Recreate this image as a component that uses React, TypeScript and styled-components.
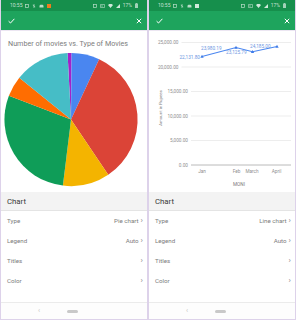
import React from 'react';
import styled, { createGlobalStyle } from 'styled-components';

const GlobalStyle = createGlobalStyle`
  html, body {
    margin: 0;
    padding: 0;
    background: #ddd2ea;
  }
  body {
    font-family: Roboto, "Noto Sans", "Liberation Sans", sans-serif;
  }
`;

const Frame = styled.div`
  display: flex;
  gap: 2px;
  width: 296px;
  height: 320px;
  padding: 0 1px 1px;
  box-sizing: border-box;
  background: #ddd2ea;
`;

const Phone = styled.div`
  flex: 1;
  min-width: 0;
  display: flex;
  flex-direction: column;
  background: #fff;
  overflow: hidden;
`;

const StatusBar = styled.div`
  height: 11px;
  background: #168f4c;
  display: flex;
  align-items: center;
  padding: 0 9px 0 9px;
  gap: 3px;
  color: rgba(255, 255, 255, 0.75);
  font-size: 5px;
  line-height: 1;
`;

const StatusSpacer = styled.div`
  flex: 1;
`;

const Toolbar = styled.div`
  height: 19px;
  background: #1ea45d;
  display: flex;
  align-items: center;
  justify-content: space-between;
  padding: 0 5px 0 7px;
`;

const ChartArea = styled.div`
  height: 162px;
  display: flex;
  flex-direction: column;
  border-top: 1px solid #ece6f2;
  box-sizing: border-box;
`;

const ChartTitle = styled.div`
  height: 20px;
  padding: 8px 0 0 7px;
  box-sizing: border-box;
  font-size: 7.2px;
  color: #7d7d7d;
  white-space: nowrap;
`;

const SectionHeader = styled.div`
  height: 18px;
  background: #f3f3f3;
  border-bottom: 1px solid #e4e4e4;
  display: flex;
  align-items: center;
  padding-left: 6px;
  font-size: 7.8px;
  color: #3a3a3a;
`;

const Row = styled.div`
  height: 20px;
  display: flex;
  align-items: center;
  justify-content: space-between;
  padding: 0 4px 0 6px;
  font-size: 6.2px;
  color: #7d7d7d;
`;

const RowValue = styled.span`
  display: flex;
  align-items: center;
  gap: 2px;
  color: #7d7d7d;
`;

const Chevron = styled.span`
  font-size: 8px;
  color: #8a8a8a;
  line-height: 1;
`;

const Filler = styled.div`
  flex: 1;
  border-bottom: 1px solid #ebebeb;
`;

const NavBar = styled.div`
  height: 16px;
  display: flex;
  align-items: center;
  padding-left: 37px;
  gap: 27px;
  background: #fdfdfd;
`;

const BackGlyph = styled.span`
  font-size: 7px;
  color: #c4c4c4;
  line-height: 1;
`;

const HomePill = styled.div`
  width: 11px;
  height: 3px;
  border-radius: 2px;
  background: #c9c9c9;
`;

const slicePath = (cx: number, cy: number, r: number, a0: number, a1: number) => {
  const pt = (a: number) => [cx + r * Math.sin((a * Math.PI) / 180), cy - r * Math.cos((a * Math.PI) / 180)];
  const [x0, y0] = pt(a0);
  const [x1, y1] = pt(a1);
  const large = a1 - a0 > 180 ? 1 : 0;
  return `M${cx},${cy} L${x0},${y0} A${r},${r} 0 ${large} 1 ${x1},${y1} Z`;
};

const slices = [
  { from: -3, to: 0.5, color: '#a322c9' },
  { from: 0.5, to: 25, color: '#4a86f0' },
  { from: 25, to: 146, color: '#db4437' },
  { from: 146, to: 187, color: '#f4b400' },
  { from: 187, to: 291, color: '#0f9d58' },
  { from: 291, to: 309, color: '#ff6d01' },
  { from: 309, to: 357, color: '#46bdc6' },
];

function PieChart() {
  return (
    <svg width="146" height="142" viewBox="0 0 146 142">
      {slices.map((s) => (
        <path key={s.color} d={slicePath(70, 69, 67, s.from, s.to)} fill={s.color} />
      ))}
    </svg>
  );
}

// y axis: 0 at 134, 5000 per 24.5px
const yFor = (v: number) => 134 - (v / 5000) * 24.5;

// the top two ticks sit further left than the rest, as in the screenshot
const ticks = [
  { v: 0, text: '0.00', right: 39 },
  { v: 5000, text: '5,000.00', right: 39 },
  { v: 10000, text: '10,000.00', right: 39 },
  { v: 15000, text: '15,000.00', right: 39 },
  { v: 20000, text: '20,000.00', right: 29.5 },
  { v: 25000, text: '25,000.00', right: 29.5 },
];
const points = [
  { x: 53, v: 22131.8, label: '22,131.80', lx: 51, ly: 27.5, anchor: 'end' },
  { x: 87, v: 23980.19, label: '23,980.19', lx: 52, ly: 18.5, anchor: 'start' },
  { x: 103.5, v: 23125.79, label: '23,125.79', lx: 77, ly: 23, anchor: 'start' },
  { x: 128, v: 24185, label: '24,185.00', lx: 101, ly: 17, anchor: 'start' },
];
const months = [
  { x: 53, name: 'Jan' },
  { x: 87.5, name: 'Feb' },
  { x: 103, name: 'March' },
  { x: 127.5, name: 'April' },
];

function LineChart() {
  const line = points.map((p) => `${p.x},${yFor(p.v)}`).join(' ');
  return (
    <svg width="146" height="161" viewBox="0 0 146 161" fontFamily="Roboto, sans-serif">
      {ticks.map((t) => (
        <g key={t.v}>
          <line x1={t.right + 3} x2="142" y1={yFor(t.v)} y2={yFor(t.v)} stroke={t.v === 0 ? '#a8a8a8' : '#e8e8e8'} strokeWidth="0.8" />
          <text x={t.right} y={yFor(t.v) + 1.6} fontSize="4.7" fill="#8f8f8f" textAnchor="end">
            {t.text}
          </text>
        </g>
      ))}
      <text x="0" y="0" fontSize="4.4" fill="#7a7a7a" textAnchor="middle" transform="translate(12.5 77) rotate(-90)">
        Amount in Rupees
      </text>
      <polyline points={line} fill="none" stroke="#4a86f0" strokeWidth="1.1" />
      {points.map((p) => (
        <g key={p.label}>
          <path d={`M${p.x},${yFor(p.v) - 1.8} L${p.x + 1.7},${yFor(p.v) + 1.2} L${p.x - 1.7},${yFor(p.v) + 1.2} Z`} fill="#3f7be8" />
          <text x={p.lx} y={p.ly} fontSize="4.7" fill="#6d98df" textAnchor={p.anchor as 'start' | 'end'}>
            {p.label}
          </text>
        </g>
      ))}
      {months.map((m) => (
        <text key={m.name} x={m.x} y="141.5" fontSize="4.7" fill="#8f8f8f" textAnchor="middle">
          {m.name}
        </text>
      ))}
      <text x="90" y="154.5" fontSize="4.7" fill="#7a7a7a" textAnchor="middle">MONI</text>
    </svg>
  );
}

function StatusIcons({ accent }: { accent: string }) {
  return (
    <StatusBar>
      <span>10:55</span>
      <svg width="4" height="4" viewBox="0 0 4 4"><rect x="0.5" y="0.5" width="3" height="3" fill="none" stroke="rgba(255,255,255,0.7)" strokeWidth="0.7" /></svg>
      <svg width="4" height="4" viewBox="0 0 4 4"><path d="M2 0 V4 M0.8 1.2 L3.2 2.8" stroke="rgba(255,255,255,0.7)" strokeWidth="0.7" /></svg>
      <svg width="5" height="4" viewBox="0 0 5 4"><path d="M0.5 3.5 H4.5 V2 A1.5 1.5 0 0 0 2.5 0.8 A1.5 1.5 0 0 0 0.5 2 Z" fill="rgba(255,255,255,0.7)" /></svg>
      <svg width="4" height="4" viewBox="0 0 4 4"><rect width="4" height="4" fill={accent} /></svg>
      <StatusSpacer />
      <svg width="4" height="4" viewBox="0 0 4 4"><rect x="0.4" y="0.4" width="3.2" height="3.2" fill="none" stroke="rgba(255,255,255,0.7)" strokeWidth="0.7" /></svg>
      <svg width="5" height="4" viewBox="0 0 5 4"><path d="M0.5 0.5 H4.5 V3.5 H0.5 Z M2 1 V3" fill="none" stroke="rgba(255,255,255,0.7)" strokeWidth="0.6" /></svg>
      <svg width="5" height="4" viewBox="0 0 5 4"><path d="M0 1 A3.5 3.5 0 0 1 5 1 L2.5 4 Z" fill="rgba(255,255,255,0.8)" /></svg>
      <svg width="4" height="4" viewBox="0 0 4 4"><path d="M0 4 L4 0 V4 Z" fill="rgba(255,255,255,0.8)" /></svg>
      <span>17%</span>
      <svg width="3" height="5" viewBox="0 0 3 5"><rect x="0" y="0.6" width="3" height="4.4" fill="rgba(255,255,255,0.6)" /><rect x="0.8" y="0" width="1.4" height="0.8" fill="rgba(255,255,255,0.6)" /></svg>
    </StatusBar>
  );
}

function TopBar() {
  return (
    <Toolbar>
      <svg width="7" height="6" viewBox="0 0 7 6">
        <path d="M0.6 3.2 L2.5 5 L6.4 0.8" fill="none" stroke="#fff" strokeWidth="1" />
      </svg>
      <svg width="6" height="6" viewBox="0 0 6 6">
        <path d="M0.8 0.8 L5.2 5.2 M5.2 0.8 L0.8 5.2" fill="none" stroke="#fff" strokeWidth="1" />
      </svg>
    </Toolbar>
  );
}

interface PanelProps {
  kind: 'pie' | 'line';
}

function Panel({ kind }: PanelProps) {
  const settings = [
    { label: 'Type', value: kind === 'pie' ? 'Pie chart' : 'Line chart' },
    { label: 'Legend', value: 'Auto' },
    { label: 'Titles', value: '' },
    { label: 'Color', value: '' },
  ];
  return (
    <Phone>
      <StatusIcons accent={kind === 'pie' ? '#f07c1e' : 'rgba(255,255,255,0.8)'} />
      <TopBar />
      <ChartArea>
        {kind === 'pie' ? (
          <>
            <ChartTitle>Number of movies vs. Type of Movies</ChartTitle>
            <PieChart />
          </>
        ) : (
          <LineChart />
        )}
      </ChartArea>
      <SectionHeader>Chart</SectionHeader>
      {settings.map((s) => (
        <Row key={s.label}>
          <span>{s.label}</span>
          <RowValue>
            {s.value}
            <Chevron>›</Chevron>
          </RowValue>
        </Row>
      ))}
      <Filler />
      <NavBar>
        <BackGlyph>‹</BackGlyph>
        <HomePill />
      </NavBar>
    </Phone>
  );
}

export default function App() {
  return (
    <>
      <GlobalStyle />
      <Frame>
        <Panel kind="pie" />
        <Panel kind="line" />
      </Frame>
    </>
  );
}
